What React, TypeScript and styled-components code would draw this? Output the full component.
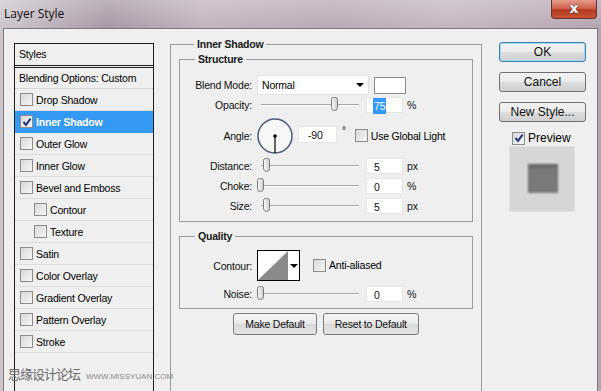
import React from "react";
import styled, { createGlobalStyle } from "styled-components";

const GlobalStyle = createGlobalStyle`
  body {
    margin: 0;
    background: #b8a9b6;
    font-family: "Liberation Sans", Arial, sans-serif;
    font-size: 10.5px;
    letter-spacing: -0.2px;
    color: #000;
  }
`;

const styleItems = [
  { label: "Drop Shadow" },
  { label: "Inner Shadow", checked: true, active: true },
  { label: "Outer Glow" },
  { label: "Inner Glow" },
  { label: "Bevel and Emboss" },
  { label: "Contour", indent: true },
  { label: "Texture", indent: true },
  { label: "Satin" },
  { label: "Color Overlay" },
  { label: "Gradient Overlay" },
  { label: "Pattern Overlay" },
  { label: "Stroke" },
];

const CheckMark = () => (
  <svg width="10" height="10" viewBox="0 0 10 10">
    <path d="M1.5 5 L4 7.8 L8.6 1.6" fill="none" stroke="#23357a" strokeWidth="2" />
  </svg>
);

const Check: React.FC<{ checked?: boolean }> = ({ checked }) => (
  <CheckBox>{checked && <CheckMark />}</CheckBox>
);

const Slider: React.FC<{ at: number }> = ({ at }) => (
  <SliderTrack>
    <Thumb style={{ left: at }} />
  </SliderTrack>
);

const App: React.FC = () => {
  return (
    <>
      <GlobalStyle />
      <Window>
        <TitleBar>
          <Title>Layer Style</Title>
          <CloseButton>x</CloseButton>
        </TitleBar>
        <Body>
          <StyleList>
            <HeaderRow>Styles</HeaderRow>
            <BlendRow>Blending Options: Custom</BlendRow>
            {styleItems.map((item) => (
              <ListRow key={item.label} $active={item.active} $indent={item.indent}>
                <Check checked={item.checked} />
                <span>{item.label}</span>
              </ListRow>
            ))}
          </StyleList>

          <OuterGroup>
            <Legend>Inner Shadow</Legend>
            <InnerGroup>
              <Legend>Structure</Legend>
              <Row>
                <Label>Blend Mode:</Label>
                <Select>
                  <span>Normal</span>
                  <Arrow />
                </Select>
                <Swatch />
              </Row>
              <Row>
                <Label>Opacity:</Label>
                <Slider at={70} />
                <Field>
                  <Selected>75</Selected>
                </Field>
                <Unit>%</Unit>
              </Row>
              <Row $height={41}>
                <Label>Angle:</Label>
                <Dial>
                  <svg width="36" height="36" viewBox="0 0 36 36">
                    <circle cx="18" cy="18" r="17" fill="#f7f7f7" stroke="#4d5a78" strokeWidth="1.5" />
                    <line x1="18" y1="18" x2="18" y2="35" stroke="#000" strokeWidth="1.2" />
                    <circle cx="18" cy="18" r="1.8" fill="#000" />
                  </svg>
                </Dial>
                <AngleField>-90</AngleField>
                <Degree>°</Degree>
                <Check />
                <CheckLabel>Use Global Light</CheckLabel>
              </Row>
              <Row>
                <Label>Distance:</Label>
                <Slider at={2} />
                <Field>5</Field>
                <Unit>px</Unit>
              </Row>
              <Row>
                <Label>Choke:</Label>
                <Slider at={-4} />
                <Field>0</Field>
                <Unit>%</Unit>
              </Row>
              <Row>
                <Label>Size:</Label>
                <Slider at={2} />
                <Field>5</Field>
                <Unit>px</Unit>
              </Row>
            </InnerGroup>

            <InnerGroup $gap={8} $top={7} $bottom={4}>
              <Legend>Quality</Legend>
              <Row $height={31}>
                <Label>Contour:</Label>
                <ContourPicker>
                  <svg width="30" height="29" viewBox="0 0 30 29">
                    <rect width="30" height="29" fill="#fff" />
                    <polygon points="0,29 30,0 30,29" fill="#8a8a8a" />
                  </svg>
                  <ContourArrow>
                    <Arrow />
                  </ContourArrow>
                </ContourPicker>
                <AntiCheck>
                  <Check />
                  <CheckLabel>Anti-aliased</CheckLabel>
                </AntiCheck>
              </Row>
              <Row $top={3}>
                <Label>Noise:</Label>
                <Slider at={-4} />
                <Field>0</Field>
                <Unit>%</Unit>
              </Row>
            </InnerGroup>

            <ButtonRow>
              <Button>Make Default</Button>
              <Button>Reset to Default</Button>
            </ButtonRow>
          </OuterGroup>

          <SideColumn>
            <DialogButton $primary>OK</DialogButton>
            <DialogButton>Cancel</DialogButton>
            <DialogButton>New Style...</DialogButton>
            <PreviewToggle>
              <Check checked />
              <span>Preview</span>
            </PreviewToggle>
            <PreviewBox>
              <PreviewSquare />
            </PreviewBox>
          </SideColumn>

          <Watermark>
            <span>思缘设计论坛</span>
            <small>WWW.MISSYUAN.COM</small>
          </Watermark>
        </Body>
      </Window>
    </>
  );
};

export default App;

const Window = styled.div`
  position: relative;
  width: 601px;
  height: 391px;
  overflow: hidden;
  display: flex;
  flex-direction: column;
  background: linear-gradient(
    90deg,
    #cfc6cd 0%,
    #a798a6 18%,
    #c2b3bf 34%,
    #b9a9b6 55%,
    #c4b6c1 75%,
    #b5a5b2 100%
  );
`;

const TitleBar = styled.div`
  height: 28px;
  flex-shrink: 0;
  display: flex;
  align-items: flex-start;
  justify-content: space-between;
  padding: 0 4px 0 4px;
  background: linear-gradient(180deg, rgba(255, 255, 255, 0.25), rgba(255, 255, 255, 0));
`;

const Title = styled.div`
  font-family: "Open Sans", "Noto Sans", sans-serif;
  font-size: 12px;
  letter-spacing: 0;
  line-height: 28px;
  color: #111;
`;

const CloseButton = styled.div`
  width: 44px;
  height: 18px;
  border: 1px solid #6a3030;
  border-top: none;
  border-radius: 0 0 4px 4px;
  background: linear-gradient(180deg, #e39a8a 0%, #d06450 45%, #b43a22 55%, #c75438 100%);
  color: #fff;
  font-family: "DejaVu Sans", sans-serif;
  font-weight: bold;
  font-size: 14px;
  line-height: 16px;
  text-align: center;
  text-shadow: 0 0 2px #5a1a10;
`;

const Body = styled.div`
  position: relative;
  flex: 1;
  display: flex;
  align-items: flex-start;
  margin: 0 3px 0 3px;
  padding: 14px 0 0 10px;
  background: #efefef;
  border: 1px solid #7a7a7a;
  border-bottom: none;
`;

const StyleList = styled.div`
  width: 138px;
  height: 400px;
  flex-shrink: 0;
  border: 1px solid #1e1e1e;
  background: #efefef;
`;

const HeaderRow = styled.div`
  height: 21px;
  line-height: 21px;
  padding-left: 4px;
  border-bottom: 3px double #1e1e1e;
`;

const BlendRow = styled.div`
  height: 20px;
  line-height: 20px;
  padding-left: 4px;
  border-bottom: 1px solid #d6d6d6;
`;

const ListRow = styled.div<{ $active?: boolean; $indent?: boolean }>`
  height: 21px;
  display: flex;
  align-items: center;
  gap: 3px;
  padding-left: ${(p) => (p.$indent ? 19 : 5)}px;
  border-bottom: 1px solid ${(p) => (p.$active ? "#3399f3" : "#dcdcdc")};
  background: ${(p) => (p.$active ? "#3399f3" : "transparent")};
  color: ${(p) => (p.$active ? "#fff" : "#000")};
  font-weight: ${(p) => (p.$active ? "bold" : "normal")};
`;

const CheckBox = styled.div`
  width: 11px;
  height: 11px;
  flex-shrink: 0;
  display: flex;
  align-items: center;
  justify-content: center;
  border: 1px solid #8c8c8c;
  background: linear-gradient(135deg, #d8d8d8, #f6f6f6);
`;

const OuterGroup = styled.fieldset`
  width: 312px;
  height: 420px;
  box-sizing: border-box;
  flex-shrink: 0;
  margin: -5px 0 0 16px;
  padding: 0 8px;
  border: 1px solid #9c9c9c;
  border-bottom: none;
  min-inline-size: 0;
`;

const Legend = styled.legend`
  margin-left: 15px;
  padding: 0 3px;
  font-weight: bold;
  line-height: 13px;
  color: #1a1a1a;
`;

const InnerGroup = styled.fieldset<{ $gap?: number; $top?: number; $bottom?: number }>`
  margin: ${(p) => p.$gap ?? 2}px 0 0 0;
  padding: ${(p) => p.$top ?? 9}px 0 ${(p) => p.$bottom ?? 5}px 0;
  border: 1px solid #9c9c9c;
  min-inline-size: 0;
`;

const Row = styled.div<{ $height?: number; $top?: number }>`
  height: ${(p) => p.$height ?? 20}px;
  margin-top: ${(p) => p.$top ?? 0}px;
  display: flex;
  align-items: center;
`;

const Label = styled.div`
  width: 72px;
  margin-right: 5px;
  text-align: right;
  color: #111;
`;

const Select = styled.div`
  width: 112px;
  height: 20px;
  box-sizing: border-box;
  display: flex;
  align-items: center;
  justify-content: space-between;
  padding: 0 4px;
  background: #fff;
  border: 1px solid #e2e2e2;
`;

const Arrow = styled.div`
  width: 0;
  height: 0;
  border-left: 4px solid transparent;
  border-right: 4px solid transparent;
  border-top: 4px solid #000;
`;

const Swatch = styled.div`
  width: 30px;
  height: 15px;
  margin-left: 5px;
  background: #fff;
  border: 1px solid #8a8a8a;
`;

const SliderTrack = styled.div`
  position: relative;
  width: 98px;
  height: 1px;
  margin: 0 7px 0 4px;
  background: #a8a8a8;
  border-bottom: 1px solid #fff;
`;

const Thumb = styled.div`
  position: absolute;
  top: -7px;
  width: 5px;
  height: 12px;
  border: 1px solid #7a7a7a;
  border-radius: 3px 3px 4px 4px;
  background: linear-gradient(90deg, #f8f8f8, #cfcfcf);
`;

const Field = styled.div`
  width: 37px;
  height: 16px;
  box-sizing: border-box;
  padding-left: 7px;
  line-height: 16px;
  background: #fff;
  border: 1px solid #e6e6e6;
  color: #111;
`;

const Selected = styled.span`
  display: inline-block;
  margin-left: -1px;
  padding: 0 1px;
  background: #3399ff;
  color: #fff;
`;

const Unit = styled.div`
  margin-left: 4px;
  color: #111;
`;

const Dial = styled.div`
  width: 36px;
  height: 36px;
`;

const AngleField = styled(Field)`
  width: 39px;
  height: 17px;
  margin-left: 5px;
  margin-top: -2px;
  padding-left: 9px;
`;

const Degree = styled.div`
  margin: -10px 9px 0 5px;
  font-size: 10px;
`;

const CheckLabel = styled.span`
  margin-left: 3px;
`;

const ContourPicker = styled.div`
  display: flex;
  height: 29px;
  border: 1px solid #000;
  background: #fff;
`;

const ContourArrow = styled.div`
  width: 11px;
  display: flex;
  align-items: center;
  justify-content: center;
`;

const AntiCheck = styled.div`
  display: flex;
  align-items: center;
  margin: -1px 0 0 13px;
`;

const ButtonRow = styled.div`
  display: flex;
  justify-content: center;
  gap: 6px;
  margin-top: 4px;
`;

const Button = styled.div`
  height: 20px;
  padding: 0 11px;
  line-height: 20px;
  border: 1px solid #7c7c7c;
  border-radius: 3px;
  background: linear-gradient(180deg, #f6f6f6 0%, #e8e8e8 50%, #d9d9d9 51%, #e2e2e2 100%);
  color: #111;
`;

const SideColumn = styled.div`
  display: flex;
  flex-direction: column;
  align-items: flex-start;
  padding-left: 17px;
  margin-top: -1px;
`;

const DialogButton = styled.div<{ $primary?: boolean }>`
  width: 85px;
  height: 18px;
  margin-bottom: 10px;
  line-height: 18px;
  text-align: center;
  font-size: 12px;
  letter-spacing: 0;
  border: 1px solid ${(p) => (p.$primary ? "#3c7fb1" : "#707070")};
  border-radius: 3px;
  box-shadow: ${(p) => (p.$primary ? "inset 0 0 0 1px #9fdcf5" : "none")};
  background: linear-gradient(180deg, #f2f2f2 0%, #ebebeb 50%, #dddddd 51%, #cfcfcf 100%);
  color: #111;
`;

const PreviewToggle = styled.div`
  display: flex;
  align-items: center;
  gap: 3px;
  margin: -1px 0 0 13px;
  font-size: 12px;
  letter-spacing: 0;
`;

const PreviewBox = styled.div`
  width: 64px;
  height: 64px;
  margin: 1px 0 0 10px;
  display: flex;
  align-items: center;
  justify-content: center;
  background: #d6d6d6;
  border: 1px solid #e2e2e2;
`;

const PreviewSquare = styled.div`
  width: 30px;
  height: 29px;
  margin: -2px 0 0 2px;
  background: #7a7a7a;
  filter: blur(0.8px);
  box-shadow: inset 0 3px 3px rgba(0, 0, 0, 0.2);
`;

const Watermark = styled.div`
  position: absolute;
  left: 4px;
  top: 335px;
  display: flex;
  align-items: baseline;
  gap: 6px;
  color: #6a6a6a;
  span {
    font-family: "Noto Sans CJK SC", sans-serif;
    font-size: 13px;
    letter-spacing: -1px;
  }
  small {
    font-family: "Liberation Sans", sans-serif;
    font-size: 8px;
    letter-spacing: 0;
    color: #8a8a8a;
  }
`;
